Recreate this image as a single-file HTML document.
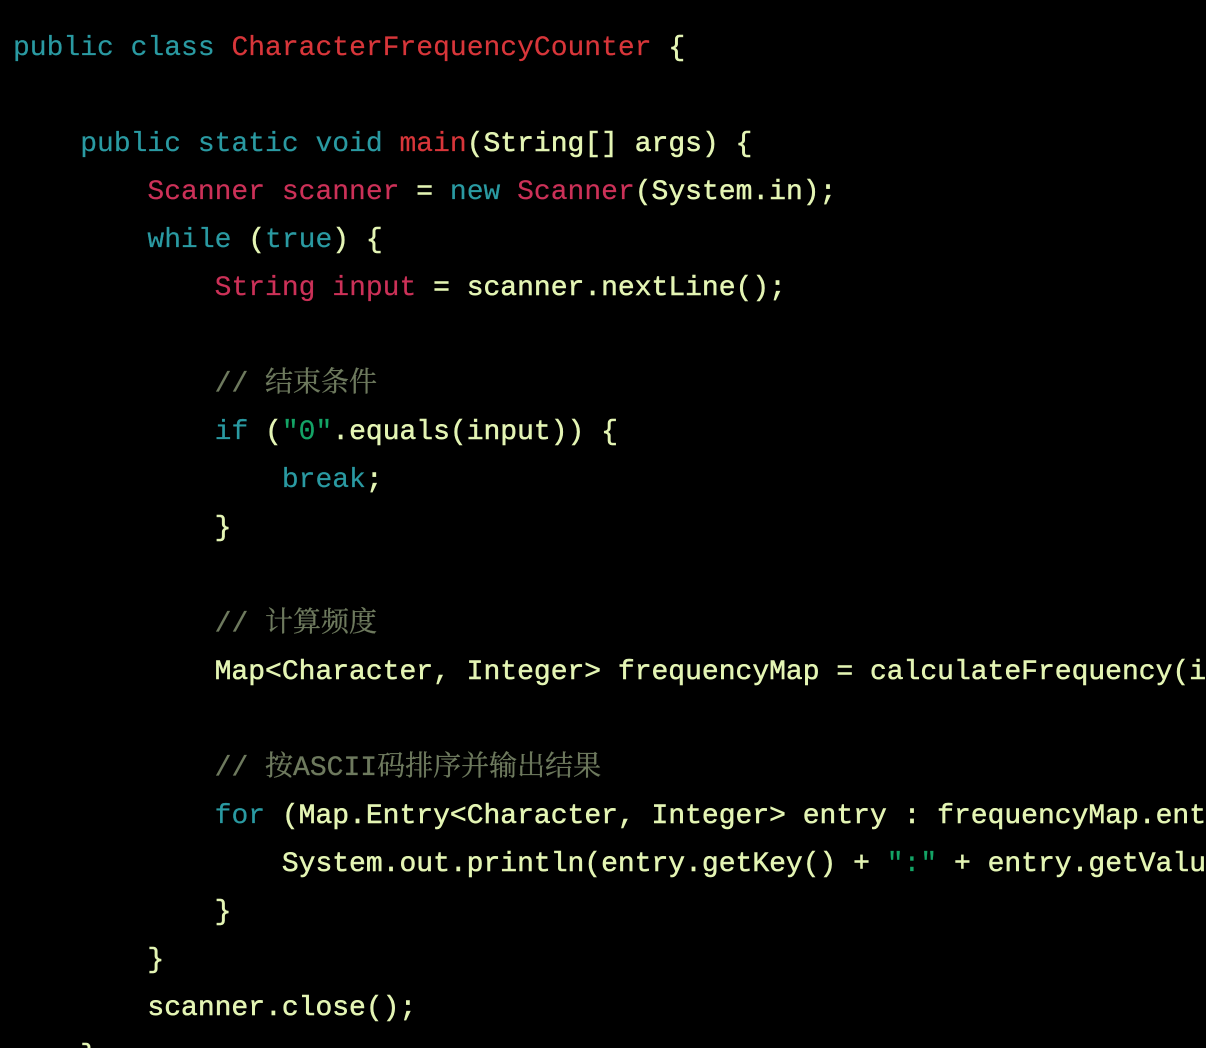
<!DOCTYPE html>
<html><head><meta charset="utf-8"><style>
html,body{margin:0;padding:0;background:#000;width:1206px;height:1048px;overflow:hidden}
pre{margin:0;padding:25px 0 0 13px;font-family:"Liberation Mono","Noto Sans CJK SC",monospace;font-size:28px;line-height:48px;color:#e4f5b4;white-space:pre;-webkit-text-stroke:0.5px #e4f5b4}
.k{color:#2a9aa2;-webkit-text-stroke:0.2px #2a9aa2}.c{color:#d8363a;-webkit-text-stroke:0.2px #d8363a}.t{color:#cc3158;-webkit-text-stroke:0.2px #cc3158}.s{color:#14a466;-webkit-text-stroke:0.2px #14a466}
.m{color:#6e7a5e;-webkit-text-stroke:0.3px #6e7a5e;font-family:"Liberation Mono","Noto Serif CJK SC",serif}
</style></head><body><pre><span class="k">public class</span> <span class="c">CharacterFrequencyCounter</span> {

    <span class="k">public static void</span> <span class="c">main</span>(String[] args) {
        <span class="t">Scanner scanner</span> = <span class="k">new</span> <span class="t">Scanner</span>(System.in);
        <span class="k">while</span> (<span class="k">true</span>) {
            <span class="t">String input</span> = scanner.nextLine();

            <span class="m">// 结束条件</span>
            <span class="k">if</span> (<span class="s">"0"</span>.equals(input)) {
                <span class="k">break</span>;
            }

            <span class="m">// 计算频度</span>
            Map&lt;Character, Integer&gt; frequencyMap = calculateFrequency(input);

            <span class="m">// 按ASCII码排序并输出结果</span>
            <span class="k">for</span> (Map.Entry&lt;Character, Integer&gt; entry : frequencyMap.entrySet()) {
                System.out.println(entry.getKey() + <span class="s">":"</span> + entry.getValue());
            }
        }
        scanner.close();
    }
</pre></body></html>
